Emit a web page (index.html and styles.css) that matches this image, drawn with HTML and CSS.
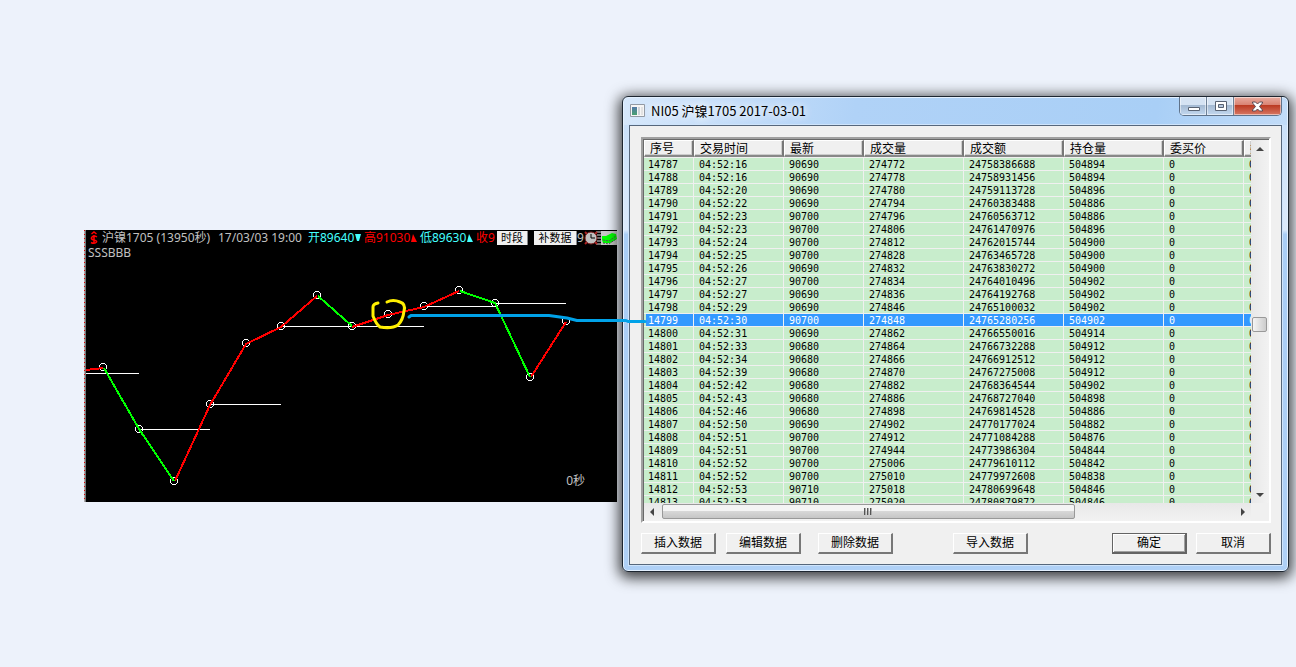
FILE: index.html
```html
<!DOCTYPE html>
<html lang="zh-CN">
<head>
<meta charset="utf-8">
<title>NI05 沪镍1705</title>
<link rel="stylesheet" href="styles.css">
</head>
<body>
<main class="desktop">
  <section class="chart" aria-label="沪镍1705">
    <svg class="plot" viewBox="86 230 531 272" aria-hidden="true">
      <g stroke="#fff" stroke-width="1" shape-rendering="crispEdges">
        <path d="M86 373.500H139M139 429.500H210M210 404.500H281M281 326.500H424M424 306.500H495M495 303.500H566"/>
      </g>
      <g fill="none" stroke="#fff" shape-rendering="crispEdges">
        <circle cx="103" cy="367" r="3.500"/><circle cx="139" cy="429" r="3.500"/><circle cx="174" cy="481" r="3.500"/><circle cx="210" cy="404" r="3.500"/><circle cx="246" cy="343" r="3.500"/><circle cx="281" cy="326" r="3.500"/><circle cx="317" cy="295" r="3.500"/><circle cx="352" cy="326" r="3.500"/><circle cx="388" cy="314" r="3.500"/><circle cx="424" cy="306" r="3.500"/><circle cx="459" cy="290" r="3.500"/><circle cx="495" cy="303" r="3.500"/><circle cx="530" cy="377" r="3.500"/><circle cx="566" cy="321" r="3.500"/>
      </g>
      <g fill="none" stroke-width="2" shape-rendering="crispEdges">
        <path stroke="#f00" d="M86 370L103 368M175 481L210 405L246 344L281 327L317 296M352 327L388 315L424 307L459 291M531 377L566 322"/>
        <path stroke="#0f0" d="M104 368L139 429L174 481M318 296L352 326M460 291L495 303L530 377"/>
      </g>
    </svg>
    <header class="quote">
      <svg class="quote-logo" viewBox="0 0 12 14" aria-hidden="true"><path d="M3.500 3L6 1L8.500 3M9 6Q6 4 4 6T6 9T8 11.500Q6 13 3 11.500M6 4V13" fill="none" stroke="#f00" stroke-width="1.500"/></svg>
      <span class="quote-name">沪镍1705 (13950秒)</span>
      <span class="quote-time">17/03/03 19:00</span>
      <span class="quote-value cyan">开89640<svg class="mark" viewBox="0 0 7 10" aria-hidden="true"><path d="M1 1H7L5 8H3Z"/></svg></span>
      <span class="quote-value red">高91030<svg class="mark" viewBox="0 0 7 10" aria-hidden="true"><path d="M3 1L7 9H1Z"/></svg></span>
      <span class="quote-value cyan">低89630<svg class="mark" viewBox="0 0 7 10" aria-hidden="true"><path d="M3 1L7 9H1Z"/></svg></span>
      <span class="quote-last red">收9</span>
      <button class="quote-button" type="button">时段</button>
      <button class="quote-button wide" type="button">补数据</button>
      <span class="quote-rest">9</span>
      <svg class="quote-icons" viewBox="0 0 34 14" aria-hidden="true">
        <path d="M13 1H18M14 4H18M13 7H18M14 10H18M13 13H18" stroke="#ddd"/>
        <path d="M2 1L14 13M14 1L2 13" stroke="#b02020" stroke-width="2"/>
        <circle cx="8" cy="7" r="6" fill="#c0c0c0" stroke="#802020"/>
        <path d="M8 3V7H12" fill="none" stroke="#000"/>
        <path d="M18 0H34V14H18Z" fill="#c8c8c8"/>
        <path d="M19 5L23 5L29 2L33 3L34 8L27 12L20 12L19 9Z" fill="#0f0"/>
        <path d="M20 9L26 10L33 5M20 12L26 13L33 8" fill="none" stroke="#555" stroke-dasharray="2 1"/>
      </svg>
    </header>
    <p class="signals">SSSBBB</p>
    <p class="seconds">0秒</p>
  </section>

  <section class="dialog" aria-labelledby="dialog-title">
    <header class="titlebar">
      <svg class="app-icon" viewBox="0 0 15 13" aria-hidden="true">
        <defs><linearGradient id="pane" x2="0" y2="1"><stop stop-color="#5278a8"/><stop offset="1" stop-color="#48a070"/></linearGradient></defs>
        <path d="M.5.500H14.500V12.500H.5Z" fill="#f5f5f5" stroke="#9299a3"/>
        <path d="M2 3H7V11H2Z" fill="url(#pane)"/><path d="M8 3H10V11H8Z" fill="#ccd2d8"/><path d="M11 3H13V11H11Z" fill="#e2e2e2"/>
      </svg>
      <h1 class="title" id="dialog-title">NI05 沪镍1705 2017-03-01</h1>
      <div class="captions">
        <button class="caption" type="button" aria-label="最小化"><svg viewBox="0 0 13 11"><path d="M1.500 6.500H12.500V9.500H1.500Z" fill="#fff" stroke="#586272"/></svg></button>
        <button class="caption" type="button" aria-label="最大化"><svg viewBox="0 0 13 11"><path d="M1.500 .5H12.500V9.500H1.500Z" fill="#fff" stroke="#586272"/><path d="M4.500 3.500H9.500V6.500H4.500Z" fill="#b6c8de" stroke="#586272"/></svg></button>
        <button class="caption close" type="button" aria-label="关闭"><svg viewBox="0 0 13 11"><path d="M1.500 1H4.500L6.500 3L8.500 1H11.500V2L8.500 5.500L11.500 9V10H8.500L6.500 8L4.500 10H1.500V9L4.500 5.500L1.500 2Z" fill="#fff" stroke="#5a4a55"/></svg></button>
      </div>
    </header>
    <div class="client">
      <div class="listview">
        <div class="viewport">
          <table class="ticks">
            <colgroup><col class="c-index"><col class="c-time"><col class="c-price"><col class="c-wide"><col class="c-wide"><col class="c-wide"><col class="c-price"><col class="c-rest"></colgroup>
            <thead><tr><th>序号</th><th>交易时间</th><th>最新</th><th>成交量</th><th>成交额</th><th>持仓量</th><th>委买价</th><th>委</th></tr></thead>
            <tbody id="rows"></tbody>
          </table>
        </div>
        <div class="vscroll">
          <button class="arrow" type="button" aria-label="向上"><svg viewBox="0 0 8 8"><path d="M0 6L4 2L8 6Z"/></svg></button>
          <span class="vthumb"></span>
          <button class="arrow" type="button" aria-label="向下"><svg viewBox="0 0 8 8"><path d="M0 3L4 7L8 3Z"/></svg></button>
        </div>
        <div class="hscroll">
          <button class="arrow" type="button" aria-label="向左"><svg viewBox="0 0 8 8"><path d="M5 0L1 4L5 8Z"/></svg></button>
          <span class="hthumb"><svg viewBox="0 0 9 7"><path d="M.5 0V7M3.500 0V7M6.500 0V7" stroke="#555"/><path d="M1.500 0V7M4.500 0V7M7.500 0V7" stroke="#aaa"/></svg></span>
          <button class="arrow" type="button" aria-label="向右"><svg viewBox="0 0 8 8"><path d="M3 0L7 4L3 8Z"/></svg></button>
        </div>
      </div>
      <footer class="actions">
        <button class="action" type="button">插入数据</button>
        <button class="action edit" type="button">编辑数据</button>
        <button class="action remove" type="button">删除数据</button>
        <button class="action import" type="button">导入数据</button>
        <button class="action confirm" type="button">确定</button>
        <button class="action cancel" type="button">取消</button>
      </footer>
    </div>
  </section>

  <svg class="annotation" viewBox="365 290 290 45" aria-hidden="true">
    <path d="M378 303Q373 304 373 307V316Q376 324 380 327Q392 329 398 325Q403 320 404 311Q406 304 400 302Q393 299 387 302" fill="none" stroke="#ffef00" stroke-width="3" stroke-linecap="round"/>
    <path d="M409 317L411 315.500H549L567 318L577 320.500H626L628 321.500H645" fill="none" stroke="#00a2e8" stroke-width="3" stroke-linejoin="round" stroke-linecap="round"/>
  </svg>
</main>
<script src="rows.js"></script>
</body>
</html>
```

FILE: styles.css
```css
* { box-sizing: border-box; }
body { margin: 0; background: #edf2fb; }
button { margin: 0; padding: 0; font: inherit; color: inherit; }
.desktop {
  position: relative;
  min-height: 100vh;
  overflow: hidden;
  font: 12px/15px "Noto Sans", "Noto Sans CJK SC", sans-serif;
}

/* chart window */
.chart {
  position: absolute;
  left: 84px;
  top: 230px;
  width: 533px;
  height: 272px;
  border-left: 2px solid #777;
  background: #000;
  color: #c0c0c0;
}
.chart::before {
  content: "";
  position: absolute;
  left: -2px;
  top: 0;
  bottom: 0;
  width: 1px;
  background: repeating-linear-gradient(#e00000 0 1px, #aaa 1px 4px);
}
.plot { position: absolute; inset: 0; width: 100%; height: 100%; }
.quote { position: relative; display: flex; align-items: center; height: 15px; padding-left: 2px; white-space: nowrap; }
.quote-logo { width: 12px; height: 14px; margin-right: 2px; }
.quote-name { width: 116px; }
.quote-time { width: 90px; }
.quote-value { display: flex; align-items: center; width: 56px; }
.mark { width: 7px; height: 10px; fill: currentColor; }
.quote-last { width: 21px; }
.cyan { color: #4ff; }
.red { color: #f00; }
.quote-button {
  width: 31px;
  height: 14px;
  margin-right: 6px;
  border: 0;
  border-right: 1px solid #888;
  background: #f0f0f0;
  color: #000;
  font-size: 11px;
  line-height: 14px;
}
.quote-button.wide { width: 43px; margin-right: 0; }
.quote-rest { width: 6px; }
.quote-icons { width: 34px; height: 14px; }
.signals { position: relative; margin: 0; padding-left: 2px; }
.seconds { position: absolute; right: 32px; bottom: 14px; margin: 0; }

/* dialog window */
.dialog {
  position: absolute;
  left: 622px;
  right: 7px;
  top: 96px;
  padding: 0 6px 6px;
  border: 1px solid #1d2630;
  border-radius: 6px;
  background: linear-gradient(100deg, #d7e8fb 0, #b0d2f7 35%, #a9cff6 80%, #c2dcf8 100%) 0 0 / 100% 28px no-repeat, linear-gradient(#c5def9, #dceafb 28%, #a9cdf5 29%, #afd0f6);
  box-shadow: inset 0 0 0 1px #e4f1ff, 0 3px 14px 3px rgba(0, 0, 0, .75);
}
.titlebar { display: flex; height: 28px; padding-left: 1px; }
.app-icon { width: 15px; height: 13px; margin-top: 7px; }
.title {
  margin: 6px 0 0 6px;
  font: 400 13px/15px "Noto Sans CJK SC", sans-serif;
  color: #000;
  text-shadow: 0 0 8px #fff, 0 0 8px #fff;
}
.captions {
  display: flex;
  height: 19px;
  margin-left: auto;
  border: 1px solid #5f7289;
  border-top: 0;
  border-radius: 0 0 5px 5px;
  overflow: hidden;
}
.caption {
  display: grid;
  place-items: center;
  width: 27px;
  border: 0;
  border-right: 1px solid #6d8096;
  background: linear-gradient(#d5e3f3 0 45%, #a3b9d2 46%, #c3d8ef);
  box-shadow: inset 0 0 0 1px rgba(255, 255, 255, .5);
}
.caption svg { width: 13px; height: 11px; }
.caption.close { width: 47px; border-right: 0; background: linear-gradient(#e9aca0 0, #d98272 45%, #bb3a22 46%, #d77763); }
.client { padding: 11px 10px 10px 11px; border: 1px solid #56677c; background: #f0f0f0; box-shadow: 0 0 0 1px #cfe4fb; }
.listview {
  display: grid;
  grid-template: 363px 18px / minmax(0, 1fr) 18px;
  border: 2px solid #a0a0a0;
  border-right-color: #fff;
  border-bottom-color: #fff;
  padding: 1px 0 0 1px;
  background: #f0f0f0;
  box-shadow: inset 1px 1px 0 #696969;
}
.viewport { overflow: hidden; background: #c8edcc; }
.ticks {
  width: 100%;
  table-layout: fixed;
  border-collapse: separate;
  border-spacing: 0;
  color: #000;
  font: 10px/11px "DejaVu Sans Mono", monospace;
}
.c-index { width: 50px; }
.c-time { width: 90px; }
.c-price { width: 80px; }
.c-wide { width: 100px; }
.ticks th, .ticks td { overflow: hidden; white-space: nowrap; text-align: left; }
.ticks th {
  height: 17px;
  padding: 0 0 0 5px;
  border: 1px solid #fff;
  border-right: 2px solid #777;
  border-bottom: 2px solid #888;
  background: #f0f0f0;
  box-shadow: inset -1px -1px 0 #ccc;
  font: 400 12px/14px "Noto Sans CJK SC", sans-serif;
}
.ticks td { height: 13px; padding: 1px 0 0 5px; border-right: 1px solid #f0f0f0; border-bottom: 1px solid #f0f0f0; }
.ticks tbody tr:first-child td { height: 14px; border-top: 1px solid #f0f0f0; }
.ticks td:first-child { padding-left: 4px; }
.ticks td:last-child, .ticks th:last-child { border-right: 0; }
.ticks .selected td { background: #39f; color: #fff; }
.ticks .selected td:first-child { box-shadow: inset 2px 0 0 #c8edcc; }

.arrow { display: grid; place-items: center; width: 18px; height: 18px; border: 0; background: none; }
.arrow svg { width: 8px; height: 8px; fill: #444; }
.vscroll { display: flex; flex-direction: column; background: linear-gradient(90deg, #e8e8e8, #f2f2f2); }
.vthumb { width: 15px; height: 15px; margin: 159px 1px auto; border: 1px solid #999; border-radius: 2px; background: linear-gradient(90deg, #f5f5f5, #ccc); }
.hscroll { display: flex; background: linear-gradient(#e8e8e8, #f2f2f2); }
.hthumb { display: grid; place-items: center; width: 413px; height: 15px; margin: 1px auto 0 0; border: 1px solid #999; border-radius: 2px; background: linear-gradient(#f4f4f4 0 45%, #d8d8d8 46%, #c6c6c6); }
.hthumb svg { width: 9px; height: 7px; }

.actions { display: flex; margin-top: 10px; }
.action {
  width: 75px;
  height: 21px;
  border: 1px solid #fff;
  border-right: 2px solid #777;
  border-bottom: 2px solid #777;
  background: #f0f0f0;
  color: #000;
  line-height: 18px;
}
.edit { margin-left: 10px; }
.remove { margin-left: 17px; }
.import { margin-left: 60px; }
.confirm { margin-left: auto; border: 1px solid #646464; border-right-width: 2px; border-bottom-width: 2px; box-shadow: inset 1px 1px 0 #fff, inset -1px -1px 0 #a0a0a0; }
.cancel { margin-left: 9px; }

.annotation { position: absolute; left: 365px; top: 290px; width: 290px; height: 45px; pointer-events: none; }
```

FILE: rows.js
```javascript
const ticks = [
  ["04:52:16", 90690, 274772, "24758386688", 504894],
  ["04:52:16", 90690, 274778, "24758931456", 504894],
  ["04:52:20", 90690, 274780, "24759113728", 504896],
  ["04:52:22", 90690, 274794, "24760383488", 504886],
  ["04:52:23", 90700, 274796, "24760563712", 504886],
  ["04:52:23", 90700, 274806, "24761470976", 504896],
  ["04:52:24", 90700, 274812, "24762015744", 504900],
  ["04:52:25", 90700, 274828, "24763465728", 504900],
  ["04:52:26", 90690, 274832, "24763830272", 504900],
  ["04:52:27", 90700, 274834, "24764010496", 504902],
  ["04:52:27", 90690, 274836, "24764192768", 504902],
  ["04:52:29", 90690, 274846, "24765100032", 504902],
  ["04:52:30", 90700, 274848, "24765280256", 504902],
  ["04:52:31", 90690, 274862, "24766550016", 504914],
  ["04:52:33", 90680, 274864, "24766732288", 504912],
  ["04:52:34", 90680, 274866, "24766912512", 504912],
  ["04:52:39", 90680, 274870, "24767275008", 504912],
  ["04:52:42", 90680, 274882, "24768364544", 504902],
  ["04:52:43", 90680, 274886, "24768727040", 504898],
  ["04:52:46", 90680, 274898, "24769814528", 504886],
  ["04:52:50", 90690, 274902, "24770177024", 504882],
  ["04:52:51", 90700, 274912, "24771084288", 504876],
  ["04:52:51", 90700, 274944, "24773986304", 504844],
  ["04:52:52", 90700, 275006, "24779610112", 504842],
  ["04:52:52", 90700, 275010, "24779972608", 504838],
  ["04:52:53", 90710, 275018, "24780699648", 504846],
  ["04:52:53", 90710, 275020, "24780879872", 504846]
];
const body = document.getElementById("rows");
ticks.forEach((tick, i) => {
  const row = body.insertRow();
  const index = 14787 + i;
  if (index === 14799) row.className = "selected";
  [index, ...tick, 0, 0].forEach((value) => { row.insertCell().textContent = value; });
});
```
